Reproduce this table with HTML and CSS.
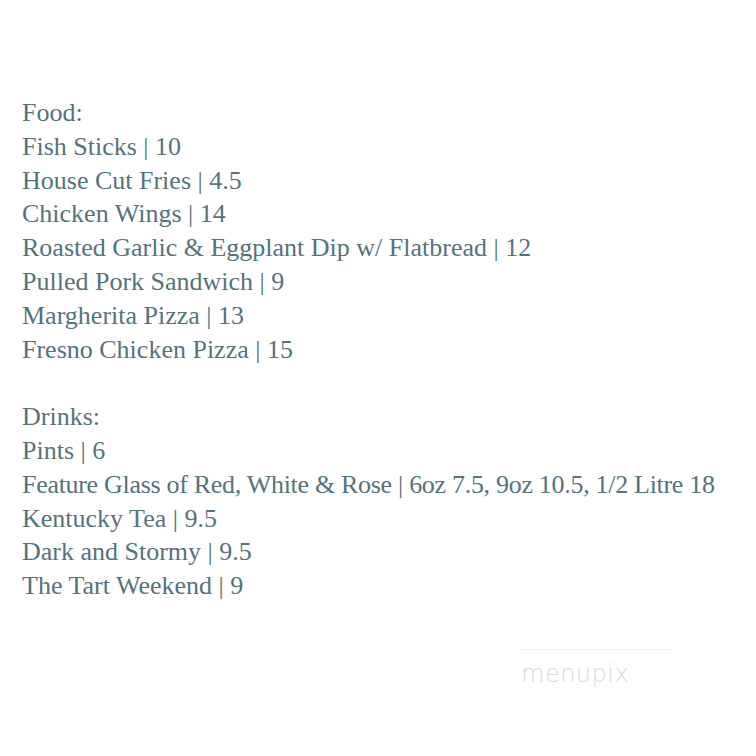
FILE: index.html
```html
<!DOCTYPE html>
<html>
<head>
<meta charset="utf-8">
<link rel="stylesheet" href="styles.css">
</head>
<body>
<div class="page">
  <div class="menu">
    <div class="block food">
      <div class="line">Food:</div>
      <div class="line">Fish Sticks | 10</div>
      <div class="line">House Cut Fries | 4.5</div>
      <div class="line">Chicken Wings | 14</div>
      <div class="line">Roasted Garlic &amp; Eggplant Dip w/ Flatbread | 12</div>
      <div class="line">Pulled Pork Sandwich | 9</div>
      <div class="line">Margherita Pizza | 13</div>
      <div class="line">Fresno Chicken Pizza | 15</div>
    </div>
    <div class="block drinks">
      <div class="line">Drinks:</div>
      <div class="line">Pints | 6</div>
      <div class="line tight">Feature Glass of Red, White &amp; Rose | 6oz 7.5, 9oz 10.5, 1/2 Litre 18</div>
      <div class="line">Kentucky Tea | 9.5</div>
      <div class="line">Dark and Stormy | 9.5</div>
      <div class="line">The Tart Weekend | 9</div>
    </div>
  </div>
  <div class="watermark">
    <div class="wm-rule"></div>
    <div class="wm-text">menupix</div>
  </div>
</div>
</body>
</html>
```
FILE: styles.css
```css
html, body {
  margin: 0;
  padding: 0;
  background: #ffffff;
}
.page {
  width: 756px;
  height: 756px;
  position: relative;
  overflow: hidden;
}
.menu {
  padding: 96px 0 0 22px;
  font-family: "Liberation Serif", "DejaVu Serif", serif;
  font-size: 26px;
  color: #55737a;
}
.block .line {
  height: 33.8px;
  line-height: 33.8px;
  white-space: nowrap;
}
.food {
  margin-bottom: 33.8px;
}
.drinks .tight {
  letter-spacing: -0.3px;
}
.watermark {
  position: absolute;
  left: 521px;
  top: 649px;
  width: 160px;
}
.wm-rule {
  height: 1px;
  background: #f3f3f3;
  width: 150px;
}
.wm-text {
  margin-top: 10px;
  font-family: "DejaVu Sans", sans-serif;
  font-weight: 200;
  font-size: 24px;
  letter-spacing: 0.5px;
  color: #d9d9d9;
}
```
